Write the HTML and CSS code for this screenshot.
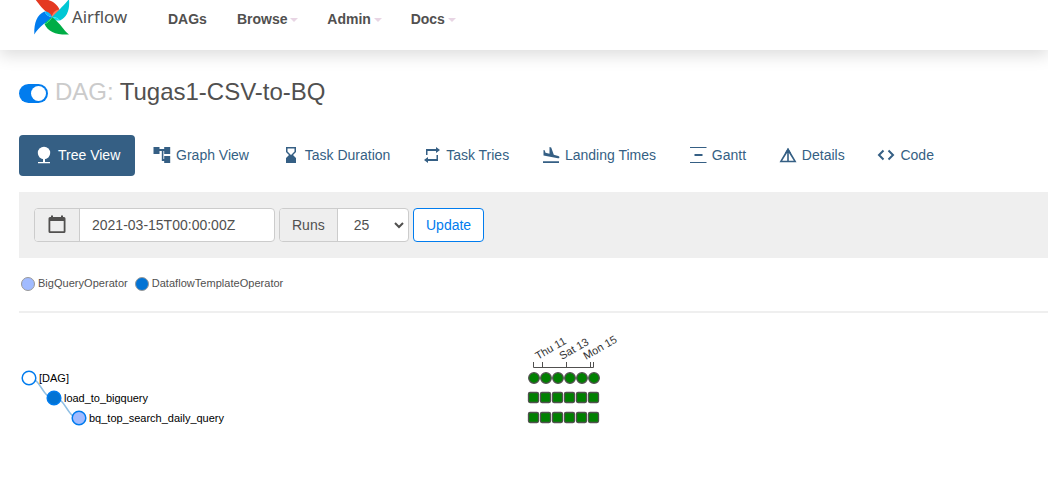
FILE: index.html
```html
<!DOCTYPE html>
<html lang="en">
<head>
<meta charset="utf-8">
<title>Airflow - DAGs</title>
<link rel="stylesheet" href="styles.css">
</head>
<body>
<header class="navbar">
  <a class="brand">
    <svg class="pinwheel" width="36" height="36" viewBox="0 0 36 36">
      <path fill="#e43921" d="M1-1C5 4 8 9 18 17C19 14 21 11 25.500 9.500C22 2 15-2 1-1Z"/>
      <path fill="#ff7557" d="M25.500 9.500C21 10 18 13 18 17C22 15 25 13 25.500 9.500Z"/>
      <path fill="#00c7d4" d="M35-1C31 4 27 8 18 17C21 17 24 18 26 20.500C33 17 36 10 35-1Z"/>
      <path fill="#11e1ee" d="M18 17C21 17 24 18 26 20.500C22 21 19 20 18 17Z"/>
      <path fill="#00ad46" d="M35 34.500C29 30 28 25 18 17C17 20 14 23 10.500 24C14 32 22 35 35 34.500Z"/>
      <path fill="#04d659" d="M18 17C17 20 14 23 10.500 24C11 20 14 18 18 17Z"/>
      <path fill="#017cee" d="M.3 34.500C4 28 9 25 18 17C15 17 12 15 10.500 11.500C3 15 0 22 .3 34.500Z"/>
      <path fill="#0cb6ff" d="M18 17C15 17 12 15 10.500 11.500C14 11 17 14 18 17Z"/>
    </svg>
    <span class="brand-name">Airflow</span>
  </a>
  <nav class="menu">
    <a class="menu-item">DAGs</a>
    <a class="menu-item">Browse<span class="caret"></span></a>
    <a class="menu-item">Admin<span class="caret"></span></a>
    <a class="menu-item">Docs<span class="caret"></span></a>
  </nav>
</header>
<main class="content">
  <h3 class="title"><span class="switch"><span class="knob"></span></span><span class="muted">DAG:</span><span>Tugas1-CSV-to-BQ</span></h3>
  <div class="tabs">
    <a class="tab active"><svg class="icon" viewBox="0 0 18 18"><circle cx="9" cy="7" r="6.200"/><path d="M8 12h2v4h5v1.200H3V16h5z"/></svg>Tree View</a>
    <a class="tab"><svg class="icon" viewBox="0 0 18 18"><path d="M17.200 8V1h-6v2H6.500V1H.5v7h6V5h2.300v10h2.400v2h6v-7h-6v3h-.8V5h.8v3z"/></svg>Graph View</a>
    <a class="tab"><svg class="icon" viewBox="0 0 18 18"><path fill-rule="evenodd" d="M4 1h10v5l-3 3 3 3v5H4v-5l3-3-3-3zM5.500 2.500v3L9 9l3.500-3.500v-3z"/></svg>Task Duration</a>
    <a class="tab"><svg class="icon" viewBox="0 0 18 18"><path d="M3 3h10V1l4 3-4 3V5H4.500v4H3zM15 15H5v2l-4-3 4-3v2h8.500V9H15z"/></svg>Task Tries</a>
    <a class="tab"><svg class="icon" viewBox="0 0 18 18"><path d="M1 15.200h16V17H1zM1.500 9.500V4l1.200.3.800 2.400 4 1.100L7.500 1l1.700.4 2.600 7.300 4.400 1.200c.8.200 1.400.7 1.200 1.500s-.7 1-1.500.8z"/></svg>Landing Times</a>
    <a class="tab"><svg class="icon" viewBox="0 0 18 18"><path d="M1 1h16.500v1H1zM5.500 8h8v2h-8zM1 16h16.500v1H1z"/></svg>Gantt</a>
    <a class="tab"><svg class="icon" viewBox="0 0 18 18"><path fill-rule="evenodd" d="M9 1.800L17.500 16.200H.5zM8.200 6.800L3.200 14.800h5zM9.800 6.800v8h5z"/><path d="M9 2l3 5H6z"/></svg>Details</a>
    <a class="tab"><svg class="icon" viewBox="0 0 18 18"><path fill="none" stroke="currentColor" stroke-width="2" d="M6.500 4.500L2 9l4.500 4.500M11.500 4.500L16 9l-4.500 4.500"/></svg>Code</a>
  </div>
  <form class="filters">
    <div class="group date">
      <span class="addon"><svg width="18" height="20" viewBox="0 0 18 20"><path fill-rule="evenodd" d="M2 2h1V.5h2V2h8V.5h2V2h1q1.500 0 1.500 1.500v13q0 1.500-1.500 1.500H2Q.5 18 .5 16.500v-13Q.5 2 2 2zM2.300 6v10.200h13.400V6z"/></svg></span>
      <span class="field">2021-03-15T00:00:00Z</span>
    </div>
    <div class="group runs">
      <span class="addon">Runs</span>
      <span class="field select">25<svg width="10" height="7" viewBox="0 0 10 7"><path d="M1 1l4 4 4-4"/></svg></span>
    </div>
    <a class="button">Update</a>
  </form>
  <div class="legend">
    <span class="legend-item"><i class="dot bigquery"></i>BigQueryOperator</span>
    <span class="legend-item"><i class="dot dataflow"></i>DataflowTemplateOperator</span>
  </div>
  <hr class="rule">
  <svg class="tree" width="1029" height="170" viewBox="19 320 1029 170">
    <g class="links"><path d="M29 378C41 378 42 398 54 398M54 398C66 398 67 418 79 418"/></g>
    <g class="nodes">
      <circle cx="29" cy="378" r="6.800" fill="#fff"/><circle cx="54" cy="398" r="6.800" fill="#0273d4"/><circle cx="79" cy="418" r="6.800" fill="#a1bbff"/>
    </g>
    <g class="node-label"><text x="39" y="382" textLength="30">[DAG]</text><text x="64" y="402" textLength="84">load_to_bigquery</text><text x="89" y="422" textLength="135">bq_top_search_daily_query</text></g>
    <path class="axis" d="M533.500 362v5.500h60V362M542.500 362v5.500M566.500 362v5.500M590.500 362v5.500"/>
    <g class="axis-label"><text transform="translate(538 360) rotate(-30)">Thu 11</text><text transform="translate(562 360) rotate(-30)">Sat 13</text><text transform="translate(586 360) rotate(-30)">Mon 15</text></g>
    <g class="states">
      <circle cx="534" cy="378" r="5.300"/><circle cx="546" cy="378" r="5.300"/><circle cx="558" cy="378" r="5.300"/><circle cx="570" cy="378" r="5.300"/><circle cx="582" cy="378" r="5.300"/><circle cx="594" cy="378" r="5.300"/>
      <rect x="528.500" y="392.500" width="10" height="10" rx="1.500"/><rect x="540.500" y="392.500" width="10" height="10" rx="1.500"/><rect x="552.500" y="392.500" width="10" height="10" rx="1.500"/><rect x="564.500" y="392.500" width="10" height="10" rx="1.500"/><rect x="576.500" y="392.500" width="10" height="10" rx="1.500"/><rect x="588.500" y="392.500" width="10" height="10" rx="1.500"/>
      <rect x="528.500" y="412.500" width="10" height="10" rx="1.500"/><rect x="540.500" y="412.500" width="10" height="10" rx="1.500"/><rect x="552.500" y="412.500" width="10" height="10" rx="1.500"/><rect x="564.500" y="412.500" width="10" height="10" rx="1.500"/><rect x="576.500" y="412.500" width="10" height="10" rx="1.500"/><rect x="588.500" y="412.500" width="10" height="10" rx="1.500"/>
    </g>
  </svg>
</main>
</body>
</html>
```
FILE: styles.css
```css
* { box-sizing: border-box; }
body { margin: 0; overflow: hidden; background: #fff; color: #51504f; font: 14px/20px "Liberation Sans", Arial, sans-serif; }
.navbar { display: flex; height: 50px; padding-left: 34px; background: #fff; box-shadow: 0 4px 16px 1px rgba(0, 0, 0, .14); }
.brand { display: flex; width: 119px; }
.brand-name { margin: 7px 0 0 2px; font: 16.8px/20px "Noto Sans", sans-serif; }
.menu { display: flex; padding-top: 9px; font-weight: 700; }
.menu-item { display: flex; align-items: center; height: 20px; padding: 0 15px; }
.caret { margin: 2px -1.200px 0 3px; border: 4px solid transparent; border-top-color: #e8d5e4; border-bottom: 0; }
.content { padding-left: 19px; }
.title { display: flex; align-items: center; height: 30px; margin: 27px 0 28px; font-size: 24px; font-weight: 400; }
.switch { width: 29px; height: 19px; margin: 3px 7px 0 0; padding: 2px; border-radius: 10px; background: #017cee; }
.knob { display: block; width: 15px; height: 15px; margin-left: 10px; border-radius: 50%; background: #fff; }
.muted { margin-right: 6px; color: #cbcbcb; }
.tabs { display: flex; gap: 1.8px; }
.tab { display: flex; align-items: center; height: 41px; padding: 0 15px 2px 16px; border-radius: 4px; color: #355f84; white-space: nowrap; }
.active { background: #355f84; color: #fff; }
.icon { width: 18px; height: 18px; margin-right: 5px; fill: currentColor; }
.filters { display: flex; gap: 4px; height: 66px; margin-top: 16px; padding: 16px 15px; background: #efefef; }
.group { display: flex; height: 34px; border: 1px solid #ccc; border-radius: 4px; overflow: hidden; background: #fff; }
.date { width: 241px; }
.runs { width: 130px; }
.addon { display: flex; align-items: center; justify-content: center; padding: 0 12px; border-right: 1px solid #ccc; background: #eee; }
.date .addon { width: 45px; padding: 0; }
.addon svg { fill: #51504f; }
.field { display: flex; align-items: center; padding-left: 12px; }
.select { flex: 1; justify-content: space-between; padding: 0 4px 0 16px; }
.select svg { fill: none; stroke: #51504f; stroke-width: 2; }
.button { height: 34px; padding: 6px 12px; border: 1px solid #017cee; border-radius: 4px; background: #fff; color: #017cee; }
.legend { display: flex; gap: 7px; padding: 18px 0 0 2px; font-size: 11px; line-height: 15px; letter-spacing: .03px; }
.legend-item { display: flex; align-items: center; }
.dot { width: 14px; height: 14px; margin-right: 3px; border: 1px solid #999; border-radius: 50%; }
.bigquery { background: #a1bbff; }
.dataflow { background: #0273d4; }
.rule { height: 2px; margin: 20px 0 7px; border: 0; background: #efefef; }
.tree { display: block; }
.links { fill: none; stroke: #8fbfe4; stroke-width: 1.5; }
.nodes { stroke: #017cee; stroke-width: 1.5; }
.node-label { fill: #000; font-size: 11px; }
.axis { fill: none; stroke: #51504f; }
.axis-label { fill: #333; font-size: 11px; }
.states { fill: green; stroke: #51504f; stroke-width: 1.3; }
```
